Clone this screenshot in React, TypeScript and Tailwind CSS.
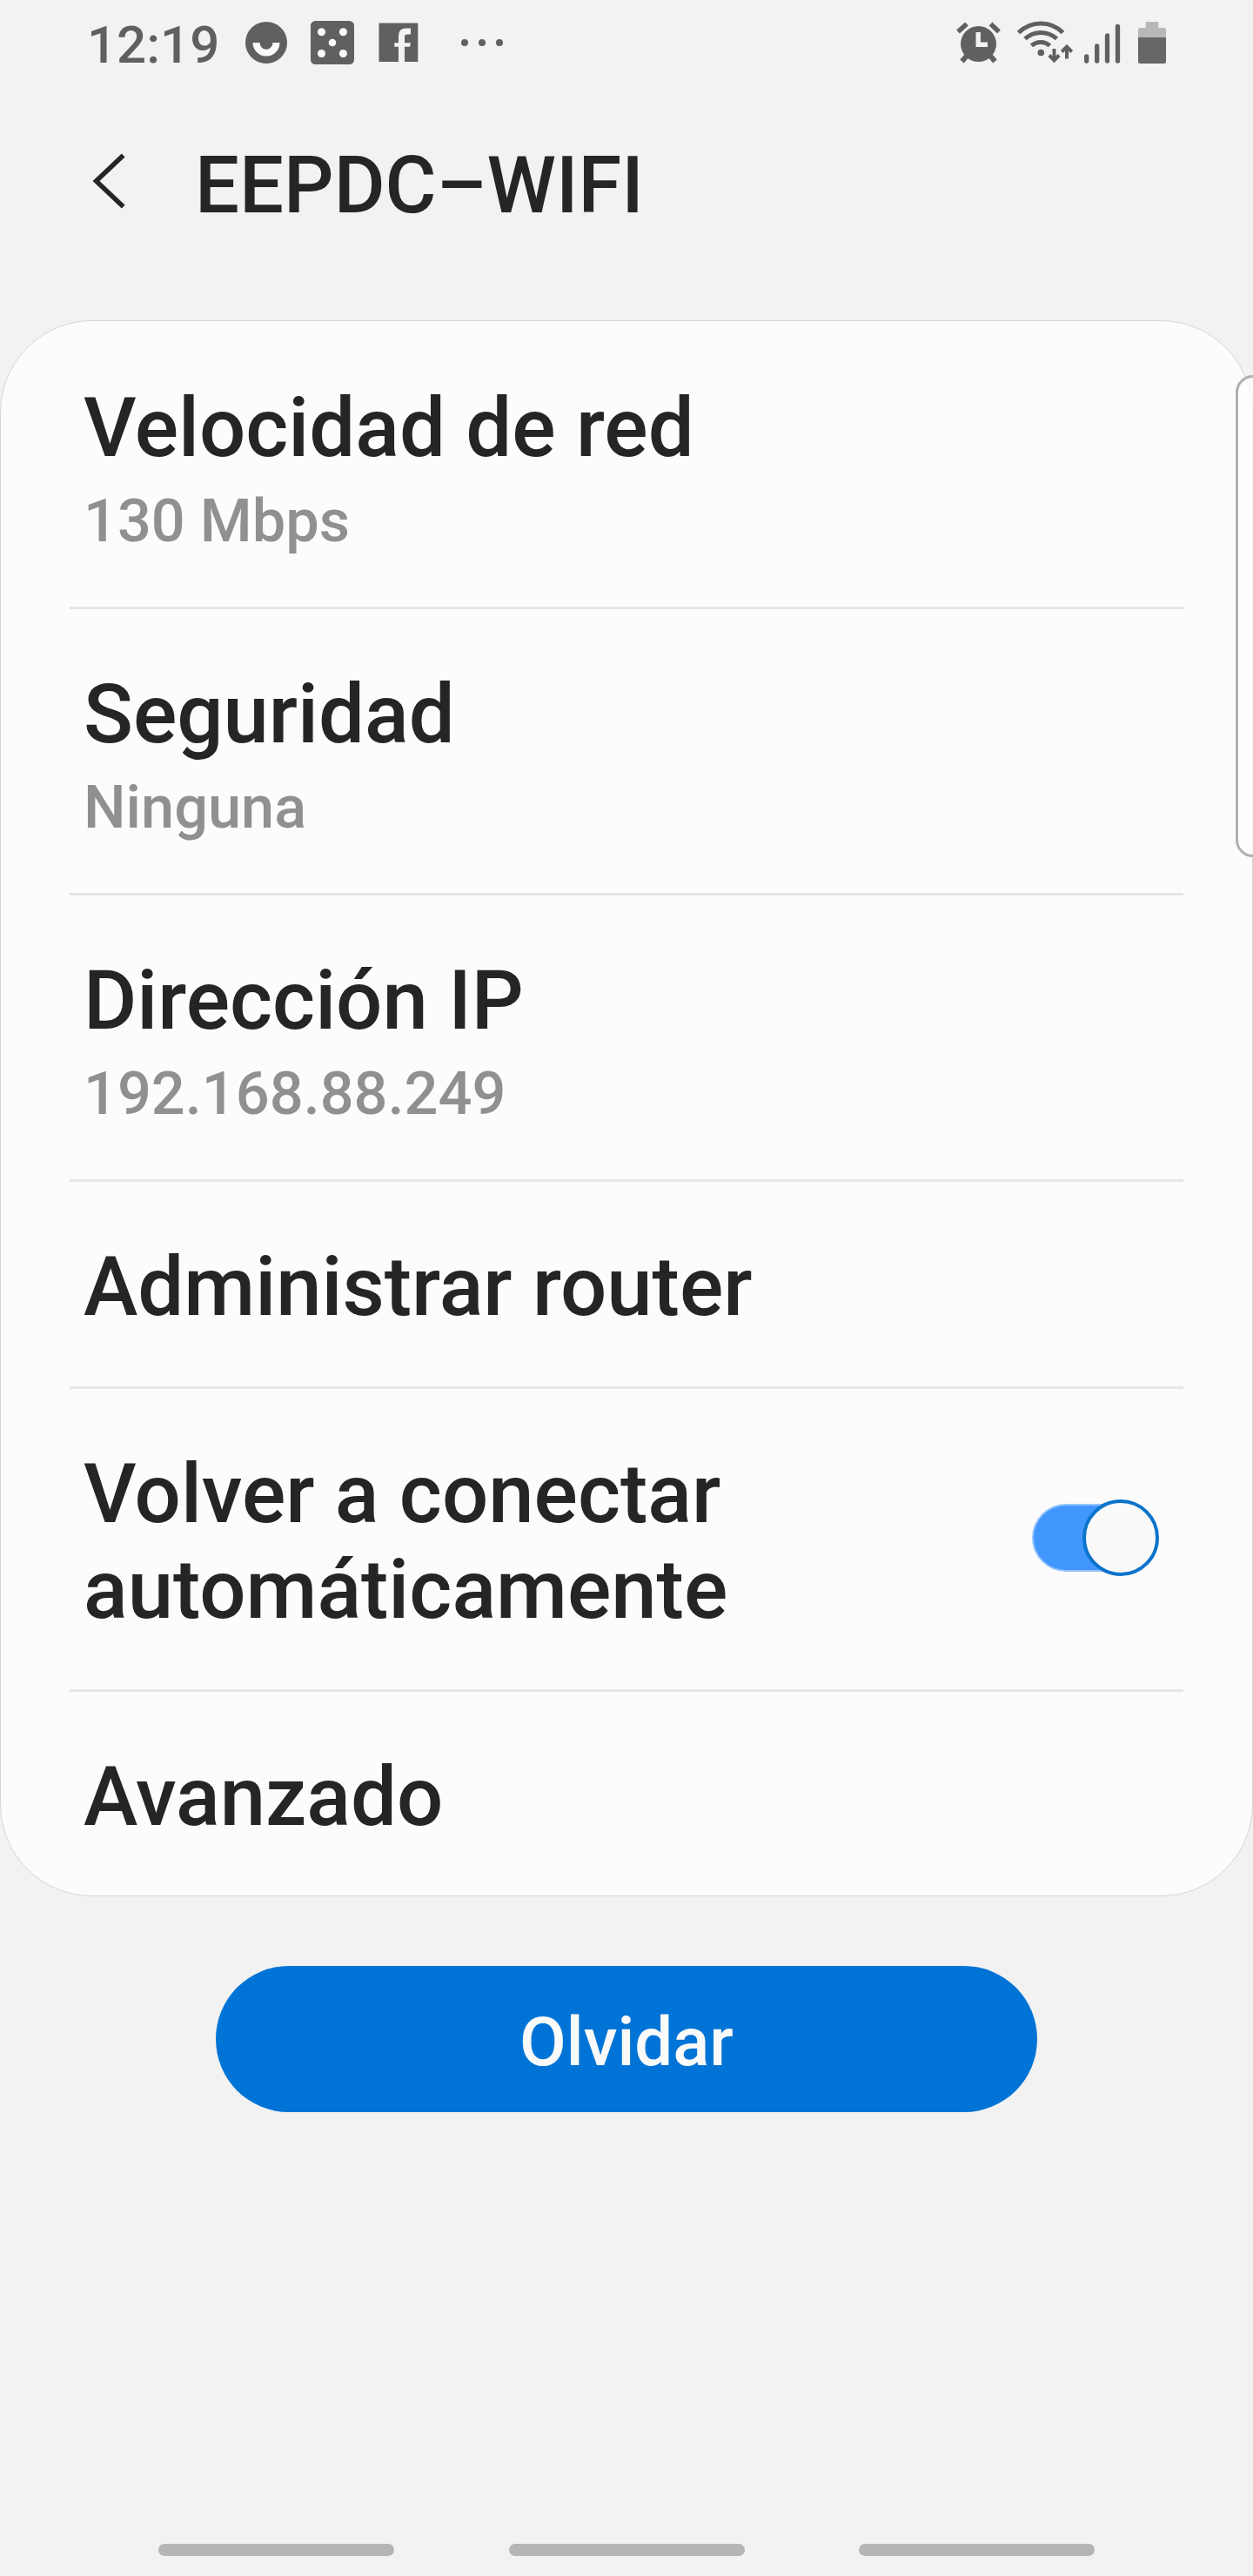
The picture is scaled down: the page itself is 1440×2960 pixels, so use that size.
import React from 'react';

function StatusIcons() {
  return (
    <svg className="h-[100px] w-[280px]" viewBox="1080 0 280 100" fill="none">
      <g stroke="#606060">
        <circle cx="1124.5" cy="50.5" r="20.5" fill="#606060" stroke="none" />
        <path d="M1101 36.5 1111 27.500M1138.500 27.500 1148 36.500" strokeWidth="5.500" />
        <path d="M1112 63 1105.500 70.500M1137 63 1143.500 70.500" strokeWidth="6" />
        <path d="M1124.200 37V51.300H1135" stroke="#f2f2f2" strokeWidth="5.400" />
        <path d="M1170.500 37.500C1185 23.500 1207.500 23.500 1221.500 37.500" strokeWidth="5" />
        <path d="M1178 44.500C1188.500 35 1204 35 1214.500 44.500" strokeWidth="5" />
        <path d="M1185.500 52.500C1191.500 47 1200.500 47 1206.500 52.500" strokeWidth="5" />
        <circle cx="1196.300" cy="60.500" r="3.800" fill="#606060" stroke="none" />
        <path d="M1211.500 56V69M1205.800 63.500 1211.500 69.300 1217.200 63.500" strokeWidth="4" />
        <path d="M1226 67.500V54M1220.300 59.500 1226 53.700 1231.700 59.500" strokeWidth="4" />
        <path d="M1248.700 65V70M1260.700 53V70M1272.500 41V70M1284.500 30.500V70" strokeWidth="5.300" strokeLinecap="round" />
      </g>
      <path d="M1316.700 26Q1316.700 25 1317.700 25H1330.300Q1331.300 25 1331.300 26V32H1338Q1340 32 1340 34V43H1308V34Q1308 32 1310 32H1316.700Z" fill="#b8b8b8" />
      <path d="M1308 43H1340V71Q1340 73 1338 73H1310Q1308 73 1308 71Z" fill="#666" />
    </svg>
  );
}

function NotificationIcons() {
  return (
    <svg className="h-[100px] w-[320px]" viewBox="270 0 320 100" fill="#606060">
      <circle cx="306" cy="49" r="24" />
      <path d="M290.500 49H298.500A7.500 7.700 0 0 0 313.500 49H321.500A15.500 15.500 0 0 1 290.500 49Z" fill="#fafafa" />
      <rect x="357" y="24" width="50" height="50" rx="5.500" />
      <g fill="#fafafa">
        <circle cx="369.500" cy="36.700" r="4.500" />
        <circle cx="394.400" cy="36.700" r="4.500" />
        <circle cx="382" cy="49" r="4.300" />
        <circle cx="369.500" cy="61.500" r="4.500" />
        <circle cx="394.400" cy="61.500" r="4.500" />
      </g>
      <path d="M435.500 26.500H480.300V71H465V53.700H471L472 49.300H465V42.500Q465 39.500 468 39.500H472V32.500H466.500Q458 32.500 458 41V49.300H453.300V53.700H458V71H435.500Z" />
      <circle cx="534" cy="49" r="4" />
      <circle cx="554" cy="49" r="4" />
      <circle cx="574" cy="49" r="4" />
    </svg>
  );
}

function Row({ title, sub, h, last, children }: { title: React.ReactNode; sub?: string; h: string; last?: boolean; children?: React.ReactNode }) {
  return (
    <div className={`${h} mx-[79px] flex justify-between px-4 ${last ? '' : 'border-b-[3px] border-[#e6e6e6]'}`}>
      <div className="pt-[66px]">
        <div className="text-[94px] leading-[110px]">{title}</div>
        {sub && <div className="mt-[12px] text-[68.5px] leading-[80px] text-[#909090]">{sub}</div>}
      </div>
      {children}
    </div>
  );
}

export default function App() {
  return (
    <div className="relative flex h-[2960px] w-[1440px] flex-col overflow-hidden bg-[#f2f2f2] font-['Roboto',sans-serif] font-medium text-[#252525]">
      <div className="flex h-[100px] shrink-0 pl-[100px] pr-20">
        <span className="w-[170px] text-[60px] leading-[103px] text-[#606060]">12:19</span>
        <NotificationIcons />
        <div className="ml-auto"><StatusIcons /></div>
      </div>
      <header className="flex h-[268px] shrink-0 pl-[100px]">
        <svg className="mt-[70px] h-[80px] w-[50px]" viewBox="100 170 50 80" fill="none">
          <path d="M141.700 178.500 110.500 208 141.700 237.500" stroke="#252525" strokeWidth="5.500" />
        </svg>
        <h1 className="ml-[74px] mt-[60px] text-[90.3px] leading-[106px]">EEPDC–WIFI</h1>
      </header>
      <main className="h-[1811px] shrink-0 rounded-[106px] border border-[#d6d6d6] bg-[#fcfcfc] pt-[2px]">
        <Row h="h-[329px]" title="Velocidad de red" sub="130 Mbps" />
        <Row h="h-[329px]" title="Seguridad" sub="Ninguna" />
        <Row h="h-[329px]" title="Dirección IP" sub="192.168.88.249" />
        <Row h="h-[238px]" title="Administrar router" />
        <Row h="h-[348px]" title={<>Volver a conectar<br />automáticamente</>}>
          <div className="mr-3 mt-[127px] flex h-[88px] w-[146px] items-center">
            <div className="h-[78px] w-[100px] shrink-0 rounded-l-full border-2 border-r-0 border-[#92c2fc] bg-[#4297ff]" />
            <div className="-ml-[42px] size-[88px] shrink-0 rounded-full border-4 border-[#0c73cb] bg-[#fafafa]" />
          </div>
        </Row>
        <Row h="h-[234px]" title="Avanzado" last />
      </main>
      <button className="mx-auto mt-20 h-[168px] w-[944px] shrink-0 rounded-full bg-[#0074d6] pt-[7px] text-[78px] text-[#fafafa]">Olvidar</button>
      <nav className="mt-auto mb-[23px] flex justify-between px-[182px]">
        <div className="h-[14px] w-[271px] rounded-full bg-[#b5b5b5]" />
        <div className="h-[14px] w-[271px] rounded-full bg-[#b5b5b5]" />
        <div className="h-[14px] w-[271px] rounded-full bg-[#b5b5b5]" />
      </nav>
      <div className="absolute -right-[20px] top-[431px] h-[554px] w-10 rounded-[20px] border-[3px] border-[#b0b0b0] bg-[#fcfcfc]/80" />
    </div>
  );
}
